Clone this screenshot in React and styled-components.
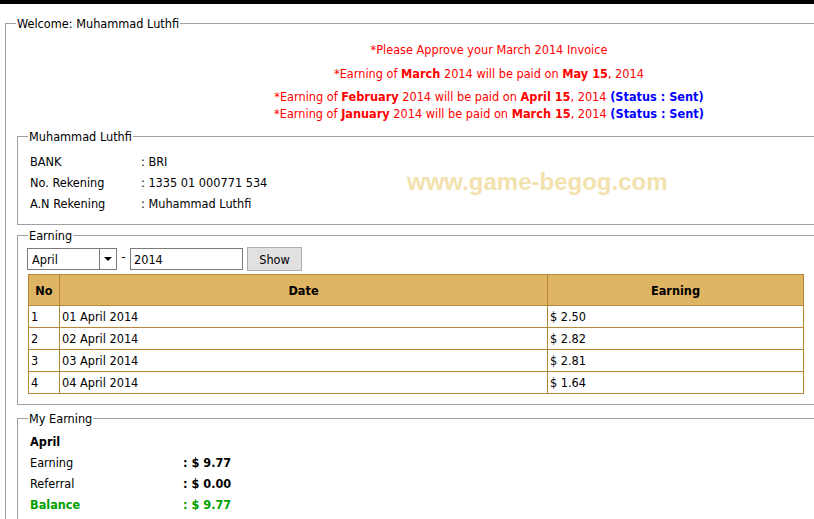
import React from "react";
import styled, { createGlobalStyle } from "styled-components";

const GlobalStyle = createGlobalStyle`
  html, body {
    margin: 0;
    padding: 0;
    background: #fff;
    overflow: hidden;
  }
  body {
    font-family: "DejaVu Sans Condensed", "DejaVu Sans", sans-serif;
    font-size: 12.6px;
    color: #000;
  }
`;

const TopBar = styled.div`
  height: 4px;
  background: #000;
`;

const Page = styled.div`
  width: 980px;
  padding: 12px 0 0 5px;
`;

const Fieldset = styled.fieldset`
  position: relative;
  margin: ${(p) => p.$mt || 0}px 0 0 0;
  padding: ${(p) => p.$pad || "4px 9px 12px 9px"};
  border: 1px solid #a0a0a0;
  min-width: 0;
  box-sizing: border-box;
  width: ${(p) => (p.$w ? p.$w + "px" : "auto")};
`;

const Legend = styled.legend`
  padding: 0 1px;
  margin-left: ${(p) => (p.$ml !== undefined ? p.$ml : 1)}px;
  line-height: 15px;
`;

const Notices = styled.div`
  text-align: center;
  color: #ff0000;
  padding-top: 10px;
  padding-bottom: 7px;
`;

const Notice = styled.p`
  margin: ${(p) => p.$mt || 0}px 0 0 0;
  line-height: 17px;
`;

const Strong = styled.b`
  color: ${(p) => p.$color || "inherit"};
`;

const InfoGrid = styled.div`
  display: grid;
  grid-template-columns: 111px auto;
  row-gap: 6px;
  padding: 6px 0 0 3px;
  line-height: 15px;
`;

const Watermark = styled.div`
  position: absolute;
  left: 389px;
  top: 24px;
  font-family: "Liberation Sans", Arial, sans-serif;
  font-weight: bold;
  font-size: 24px;
  color: #f2e2ad;
  white-space: nowrap;
`;

const Controls = styled.div`
  display: flex;
  align-items: center;
  margin-top: 4px;
`;

const SelectBox = styled.div`
  display: flex;
  width: 90px;
  height: 22px;
  box-sizing: border-box;
  border: 1px solid #7a7a7a;
  background: #fff;
`;

const SelectValue = styled.div`
  flex: 1;
  padding: 3px 0 0 4px;
`;

const SelectArrow = styled.div`
  width: 16px;
  border-left: 1px solid #7a7a7a;
  display: flex;
  align-items: center;
  justify-content: center;
  &::after {
    content: "";
    border-left: 4px solid transparent;
    border-right: 4px solid transparent;
    border-top: 4px solid #000;
  }
`;

const Dash = styled.span`
  width: 13px;
  text-align: center;
  position: relative;
  top: -3px;
`;

const TextInput = styled.div`
  width: 113px;
  height: 22px;
  box-sizing: border-box;
  border: 1px solid #7a7a7a;
  padding: 3px 0 0 3px;
`;

const Button = styled.div`
  margin-left: 4px;
  width: 55px;
  height: 24px;
  box-sizing: border-box;
  border: 1px solid #adadad;
  background: #e1e1e1;
  display: flex;
  align-items: center;
  justify-content: center;
`;

const Table = styled.table`
  border-collapse: collapse;
  margin: 3px 0 0 1px;
  width: 776px;
  table-layout: fixed;
`;

const Th = styled.th`
  background: #dfb463;
  border: 1px solid #b5873a;
  height: 30px;
  font-weight: bold;
  text-align: center;
  padding: 0;
  width: ${(p) => (p.$w ? p.$w + "px" : "auto")};
`;

const Td = styled.td`
  border: 1px solid #b5873a;
  height: 21px;
  padding: 0 0 0 2px;
  line-height: 15px;
`;

const SummaryGrid = styled.div`
  display: grid;
  grid-template-columns: 153px auto;
  row-gap: 6px;
  padding: 4px 0 0 3px;
  line-height: 15px;
`;

const Month = styled.div`
  grid-column: 1 / 3;
  font-weight: bold;
`;

const Label = styled.div`
  color: ${(p) => (p.$green ? "#00a000" : "inherit")};
  font-weight: ${(p) => (p.$green ? "bold" : "normal")};
`;

const Value = styled.div`
  font-weight: bold;
  color: ${(p) => (p.$green ? "#00a000" : "inherit")};
`;

const rows = [
  ["1", "01 April 2014", "$ 2.50"],
  ["2", "02 April 2014", "$ 2.82"],
  ["3", "03 April 2014", "$ 2.81"],
  ["4", "04 April 2014", "$ 1.64"],
];

export default function App() {
  return (
    <>
      <GlobalStyle />
      <TopBar />
      <Page>
        <Fieldset $w={968} $pad="0 11px 10px 11px">
          <Legend $ml={-1}>Welcome: Muhammad Luthfi</Legend>
          <Notices>
            <Notice>*Please Approve your March 2014 Invoice</Notice>
            <Notice $mt={7}>
              *Earning of <Strong>March</Strong> 2014 will be paid on{" "}
              <Strong>May 15</Strong>, 2014
            </Notice>
            <Notice $mt={6}>
              *Earning of <Strong>February</Strong> 2014 will be paid on{" "}
              <Strong>April 15</Strong>, 2014{" "}
              <Strong $color="#0000ff">(Status : Sent)</Strong>
              <br />
              *Earning of <Strong>January</Strong> 2014 will be paid on{" "}
              <Strong>March 15</Strong>, 2014{" "}
              <Strong $color="#0000ff">(Status : Sent)</Strong>
            </Notice>
          </Notices>

          <Fieldset $pad="4px 9px 13px 9px">
            <Legend>Muhammad Luthfi</Legend>
            <InfoGrid>
              <div>BANK</div>
              <div>: BRI</div>
              <div>No. Rekening</div>
              <div>: 1335 01 000771 534</div>
              <div>A.N Rekening</div>
              <div>: Muhammad Luthfi</div>
            </InfoGrid>
            <Watermark>www.game-begog.com</Watermark>
          </Fieldset>

          <Fieldset $mt={3} $pad="0 9px 10px 9px">
            <Legend>Earning</Legend>
            <Controls>
              <SelectBox>
                <SelectValue>April</SelectValue>
                <SelectArrow />
              </SelectBox>
              <Dash>-</Dash>
              <TextInput>2014</TextInput>
              <Button>Show</Button>
            </Controls>
            <Table>
              <thead>
                <tr>
                  <Th $w={30}>No</Th>
                  <Th $w={487}>Date</Th>
                  <Th>Earning</Th>
                </tr>
              </thead>
              <tbody>
                {rows.map((r) => (
                  <tr key={r[0]}>
                    <Td>{r[0]}</Td>
                    <Td>{r[1]}</Td>
                    <Td>{r[2]}</Td>
                  </tr>
                ))}
              </tbody>
            </Table>
          </Fieldset>

          <Fieldset $mt={6}>
            <Legend>My Earning</Legend>
            <SummaryGrid>
              <Month>April</Month>
              <Label>Earning</Label>
              <Value>: $ 9.77</Value>
              <Label>Referral</Label>
              <Value>: $ 0.00</Value>
              <Label $green>Balance</Label>
              <Value $green>: $ 9.77</Value>
            </SummaryGrid>
          </Fieldset>
        </Fieldset>
      </Page>
    </>
  );
}
